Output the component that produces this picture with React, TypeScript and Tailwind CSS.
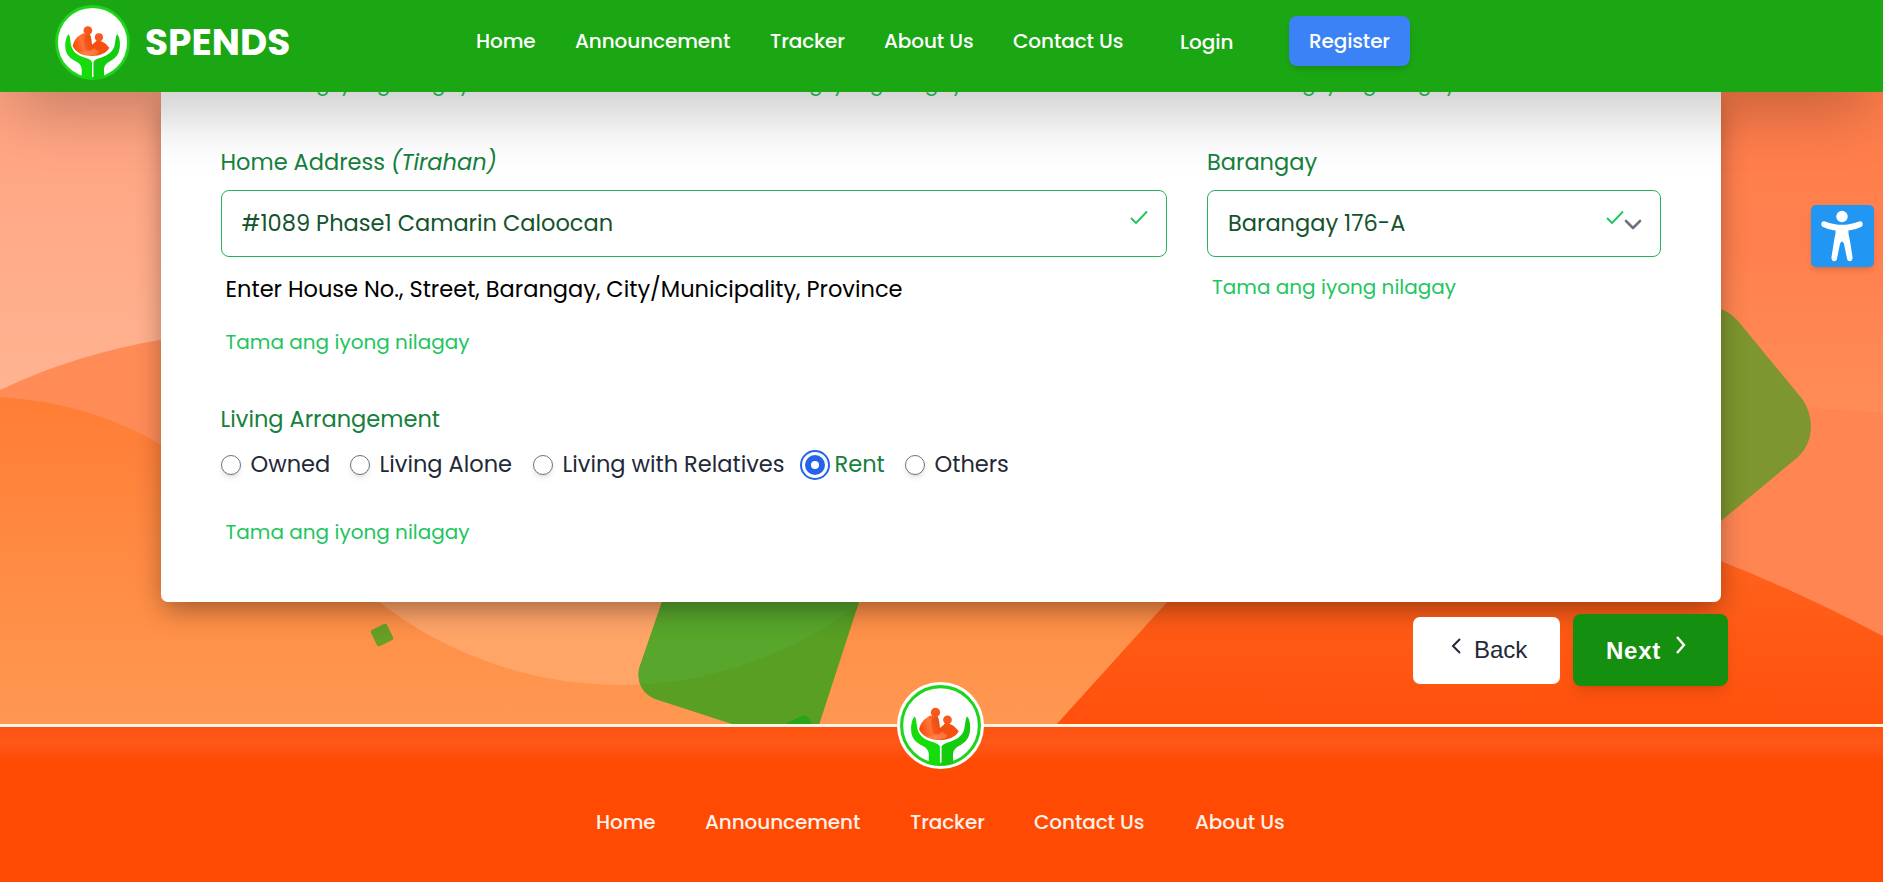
import React from "react";

const NAV = [
  { label: "Home", cls: "w-[58px]" },
  { label: "Announcement", cls: "w-[154px]" },
  { label: "Tracker", cls: "w-[73px]" },
  { label: "About Us", cls: "w-[88px]" },
  { label: "Contact Us", cls: "w-[112px]" },
];

const FOOT = [
  { label: "Home", cls: "w-[59px]" },
  { label: "Announcement", cls: "w-[155px]" },
  { label: "Tracker", cls: "w-[74px]" },
  { label: "Contact Us", cls: "w-[111px]" },
  { label: "About Us", cls: "w-[90px]" },
];

const RADIOS = [
  { label: "Owned", cls: "w-[109px] mr-5", checked: false },
  { label: "Living Alone", cls: "w-[162px] mr-[21px]", checked: false },
  { label: "Living with Relatives", cls: "w-[251px] mr-[21px]", checked: false },
  { label: "Rent", cls: "w-[80px] mr-5", checked: true },
  { label: "Others", cls: "w-[104px]", checked: false },
];

function Logo({ className }: { className: string }) {
  return (
    <svg viewBox="0 0 100 100" className={className} aria-hidden="true">
      <defs>
        <linearGradient id="family" x1="0" y1="0.6" x2="1" y2="0.4">
          <stop offset="0" stopColor="#f9480a" />
          <stop offset="0.3" stopColor="#ff7436" />
          <stop offset="0.55" stopColor="#f4500f" />
          <stop offset="1" stopColor="#fb4f12" />
        </linearGradient>
        <clipPath id="disc">
          <circle cx="50" cy="50" r="49" />
        </clipPath>
      </defs>
      <circle cx="50" cy="50" r="48" fill="#fff" stroke="#1fd51b" strokeWidth="3.8" />
      <g clipPath="url(#disc)">
        <path d="M18 39C14 43 12 56 15.500 64C19 72 28 75 31 77C34 80 35.600 82 35.600 86V100H49.300V77C49 73 45 72 39 70C30 67 25 63 22.500 57C20 51 21 42 18 39Z" fill="#16dc0c" />
        <path d="M83 39C87 43 88 56 84.500 64C81 72 73 75 70 77C67 80 65.400 82 65.400 86V100H51.300V77C51.600 73 56 72 62 70C70 67 76 63 78.500 57C81 51 80 42 83 39Z" fill="#14cb10" />
      </g>
      <circle cx="43.800" cy="34" r="5.800" fill="#f9581d" />
      <circle cx="58.600" cy="43" r="5.400" fill="#f9581d" />
      <path d="M23.500 55C25.500 46 30 41 38 37.500L46.500 39C48.500 43 48.500 48 49.300 53L54 49C55 47.500 57 47 59 47.500C66 49 69 53 72.500 57C69 64 60 68 49 68C38 68 28 64 23.500 55Z" fill="url(#family)" />
      <path d="M47 61L53 57.500C53.500 59 54 60 57 60.500C60 63 57 67 48 67C41 67 36 65 33 62.500C38 62.500 43 62 47 61Z" fill="#ff8a55" opacity=".6" />
      <path d="M40 41C38 47 39 55 41 60L48 60.500L52 56L49.300 53C48.500 48 48.500 43 46.500 39Z" fill="#e8450a" opacity=".45" />
    </svg>
  );
}

function Check({ className }: { className: string }) {
  return (
    <svg viewBox="0 0 18 14" className={className} fill="none" stroke="#22c55e" strokeWidth="1.9">
      <path d="M1 8L6 13L17 1.5" />
    </svg>
  );
}

function Backdrop() {
  return (
    <svg className="absolute inset-0" width="1883" height="882" viewBox="0 0 1883 882" aria-hidden="true">
      <defs>
        <linearGradient id="pink" x1="0" y1="0" x2="0" y2="1">
          <stop offset="0" stopColor="#ff9d7c" />
          <stop offset="1" stopColor="#ffb592" />
        </linearGradient>
        <linearGradient id="coral" gradientUnits="userSpaceOnUse" x1="0" y1="90" x2="0" y2="410">
          <stop offset="0" stopColor="#ff7d4b" />
          <stop offset="0.5" stopColor="#ff804e" />
          <stop offset="1" stopColor="#ff8c57" />
        </linearGradient>
        <linearGradient id="left" gradientUnits="userSpaceOnUse" x1="0" y1="395" x2="0" y2="725">
          <stop offset="0" stopColor="#ff7d35" />
          <stop offset="1" stopColor="#ff9851" />
        </linearGradient>
        <linearGradient id="hot" gradientUnits="userSpaceOnUse" x1="0" y1="540" x2="0" y2="725">
          <stop offset="0" stopColor="#ff641e" />
          <stop offset="1" stopColor="#ff500c" />
        </linearGradient>
        <clipPath id="tile">
          <path d="M662 602L639 669Q636 691 655 699L735 725H819L859 602Z" />
        </clipPath>
      </defs>
      <rect width="900" height="420" fill="url(#pink)" />
      <rect x="900" width="983" height="882" fill="url(#coral)" />
      <path d="M0 390Q75 354 165 339H600V725H0Z" fill="#ff8c57" />
      <path d="M0 397Q90 402 165 447L500 600H1170L1056 725H0Z" fill="url(#left)" />
      <circle cx="620.5" cy="292" r="393" fill="#ffa568" clipPath="inset(303px 0 0 0)" />
      <path d="M1169 600L1056 725H1883V636Q1800 592 1721 561L1600 500H1250Z" fill="url(#hot)" />
      <path d="M1700 405Q1800 406 1883 413V636Q1800 592 1721 561Z" fill="#ff8553" />
      <path d="M1680 290L1721 309Q1731 313 1738 321L1803 400Q1811 412 1811 428Q1810 446 1798 457L1721 521L1680 550Z" fill="#7e962e" />
      <path d="M662 602L639 669Q636 691 655 699L735 725H819L859 602Z" fill="#589f24" />
      <circle cx="620.5" cy="292" r="393" fill="#58a62c" clipPath="url(#tile)" />
      <path d="M783 725L801 716Q809 713 812 725Z" fill="#27a51b" />
      <rect x="373" y="626" width="18" height="18" rx="2.5" transform="rotate(-26 382 635)" fill="#679f27" />
    </svg>
  );
}

export default function App() {
  return (
    <div className="relative flex h-[882px] w-[1883px] flex-col overflow-hidden bg-[#ff4a03] font-['Poppins','Inter',sans-serif]">
      <Backdrop />
      <header className="relative z-20 flex h-[92px] shrink-0 items-start bg-[#1ba614] text-xl font-medium text-white shadow-[0_31px_62px_-15px_rgba(0,0,0,0.25)]">
        <Logo className="mt-[5px] ml-[55px] size-[75px]" />
        <div className="mt-[22px] ml-[15px] w-[331px] text-[37.5px] leading-[40px] font-bold whitespace-nowrap">SPENDS</div>
        <nav className="mt-[26px] flex gap-[41px] leading-[30px] tracking-[-0.1px] whitespace-nowrap">
          {NAV.map((n) => (
            <a key={n.label} className={n.cls}>{n.label}</a>
          ))}
        </nav>
        <a className="mt-[27px] ml-[55px] w-[109px] leading-[30px]">Login</a>
        <a className="mt-4 flex h-[50px] w-[121px] items-center justify-center rounded-lg bg-[#3b82f6] tracking-[-0.15px] shadow-md">Register</a>
      </header>

      <main className="relative z-10 flex h-[632px] shrink-0 flex-col">
        <section className="ml-[161px] flex h-[510px] w-[1560px] flex-col rounded-b-[7px] bg-white px-[60px] text-[22.5px] shadow-[0_10px_28px_-3px_rgba(0,0,0,0.38)]">
          <div className="flex h-[7px] items-end text-xl leading-[30px] text-[#22c55e]">
            <span className="w-[493px] pl-[5px]">Tama ang iyong nilagay</span>
            <span className="w-[493px] pl-[5px]">Tama ang iyong nilagay</span>
            <span className="pl-[5px]">Tama ang iyong nilagay</span>
          </div>
          <div className="flex gap-10 pt-[46px]">
            <div className="w-[946px]">
              <label className="-ml-[0.5px] block h-[45px] leading-[34px] text-[#15803d]">Home Address <i>(Tirahan)</i></label>
              <div className="flex h-[67px] items-center justify-between rounded-lg border border-[#22b455] pr-[18px] pl-[19.5px] text-[#14532d]">
                <span>#1089 Phase1 Camarin Caloocan</span>
                <Check className="mb-[14px] h-[14px] w-[18px]" />
              </div>
              <p className="mt-[15px] pl-[4.5px] leading-[34px] text-black">Enter House No., Street, Barangay, City/Municipality, Province</p>
              <p className="mt-[21px] pl-[4.5px] text-xl leading-[30px] text-[#22c55e]">Tama ang iyong nilagay</p>
            </div>
            <div className="w-[454px]">
              <label className="block h-[45px] leading-[34px] text-[#15803d]">Barangay</label>
              <div className="flex h-[67px] items-center rounded-lg border border-[#22b455] pr-[18px] pl-5 text-[#14532d]">
                <span className="grow">Barangay 176-A</span>
                <Check className="mb-[14px] h-[14px] w-[18px]" />
                <svg viewBox="0 0 18 12" className="mt-[2px] h-3 w-[18px]" fill="none" stroke="#6b7280" strokeWidth="2.6" strokeLinecap="round" strokeLinejoin="round">
                  <path d="M2 2L9 9L16 2" />
                </svg>
              </div>
              <p className="mt-[15px] pl-[5px] text-xl leading-[30px] text-[#22c55e]">Tama ang iyong nilagay</p>
            </div>
          </div>
          <p className="mt-[45px] -ml-[0.5px] leading-[34px] text-[#15803d]">Living Arrangement</p>
          <div className="mt-[11px] flex leading-[34px] text-[#1f2937]">
            {RADIOS.map((r) => (
              <label key={r.label} className={`flex items-center gap-[9.5px] whitespace-nowrap ${r.cls}`}>
                {r.checked ? (
                  <span className="mt-px flex size-5 shrink-0 items-center justify-center rounded-full bg-[#2563eb] ring-2 ring-[#2563eb] ring-offset-[3px]">
                    <span className="size-2 rounded-full bg-white" />
                  </span>
                ) : (
                  <span className="mt-px size-5 shrink-0 rounded-full border border-[#6b7280] bg-white shadow-md" />
                )}
                <span className={r.checked ? "text-[#15803d]" : ""}>{r.label}</span>
              </label>
            ))}
          </div>
          <p className="mt-[36px] pl-[4.5px] text-xl leading-[30px] text-[#22c55e]">Tama ang iyong nilagay</p>
        </section>

        <div className="mr-[155px] flex items-start justify-end gap-[13px] pt-[12px] font-['Liberation_Sans',sans-serif] text-2xl">
          <button className="mt-[3px] flex h-[67px] w-[147px] items-center rounded-[7px] bg-white pl-[38px] text-[#1f2937]">
            <svg viewBox="0 0 11 16" className="mb-[9px] h-4 w-[11px]" fill="none" stroke="currentColor" strokeWidth="2"><path d="M9 1L2 8L9 15" /></svg>
            <span className="mb-[2px] ml-[12px]">Back</span>
          </button>
          <button className="flex h-[72px] w-[155px] items-center rounded-[8px] bg-[#158f10] pl-[31px] font-bold text-white shadow-lg">
            <span className="w-[59px] pt-px tracking-[0.8px]">Next</span>
            <svg viewBox="0 0 11 18" className="mb-[10px] ml-3 h-[18px] w-[11px]" fill="none" stroke="currentColor" strokeWidth="2.4"><path d="M2 1L9 9L2 17" /></svg>
          </button>
        </div>
      </main>

      <footer className="relative z-10 flex h-[158px] shrink-0 flex-col items-center rounded-bl border-t-[3px] border-[#fdf6ea] bg-linear-to-b from-[#ff5210] via-[#ff5818] via-10% to-[#ff4a03] to-22% text-xl font-medium text-[#fff1e8]">
        <div className="-mt-[45px] mr-[2px] flex size-[87px] shrink-0 items-center justify-center rounded-full bg-white">
          <Logo className="size-[81px]" />
        </div>
        <nav className="mt-[38px] mr-[2px] flex w-[689px] justify-between leading-[30px] tracking-[-0.1px] whitespace-nowrap">
          {FOOT.map((n) => (
            <a key={n.label} className={n.cls}>{n.label}</a>
          ))}
        </nav>
      </footer>

      <button aria-label="Accessibility" className="absolute top-[205px] left-[1811px] z-20 flex h-[62px] w-[63px] items-center justify-center rounded-[5px] bg-[#2196f3] pr-px shadow-md">
        <svg viewBox="0 0 42 52" className="h-[52px] w-[42px]" fill="#fff">
          <circle cx="21" cy="6.5" r="5.700" />
          <path d="M4 11.5C10 14 16 14.800 21 14.800S32 14 38 11.5C42 10.500 43 15.500 40 17C37 18.500 31 20 27.500 20.500C27 24 28.500 27 29 31L31.500 47C32 52 26.500 52.500 26 48.500L23 34C22 30.500 20 30.500 19 34L16 48.500C15.500 52.500 10 52 10.500 47L13 31C13.500 27 15 24 14.500 20.500C11 20 5 18.500 2 17C-1 15.500 0 10.500 4 11.5Z" />
        </svg>
      </button>
    </div>
  );
}
